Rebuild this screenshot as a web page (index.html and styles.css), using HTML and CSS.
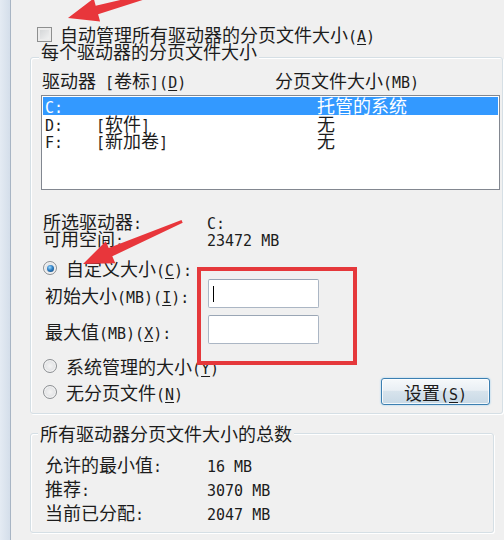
FILE: index.html
```html
<!DOCTYPE html>
<html lang="zh-CN">
<head>
<meta charset="utf-8">
<title>虚拟内存</title>
<link rel="stylesheet" href="styles.css">
</head>
<body>
<div class="window">
  <div class="edge"></div>
  <div class="main">
    <div class="check-row">
      <span class="checkbox"></span>
      <span>自动管理所有驱动器的分页文件大小<span class="a">(<u>A</u>)</span></span>
    </div>

    <div class="group g1">
      <div class="legend">每个驱动器的分页文件大小</div>
      <div class="cols">
        <span class="c1">驱动器<span class="a"> [</span>卷标<span class="a">](<u>D</u>)</span></span>
        <span>分页文件大小<span class="a">(MB)</span></span>
      </div>
      <div class="listbox">
        <div class="item sel"><span><span class="a">C:</span></span><span></span><span>托管的系统</span></div>
        <div class="item"><span><span class="a">D:</span></span><span><span class="a">[</span>软件<span class="a">]</span></span><span>无</span></div>
        <div class="item"><span><span class="a">F:</span></span><span><span class="a">[</span>新加卷<span class="a">]</span></span><span>无</span></div>
      </div>

      <div class="info">
        <span>所选驱动器<span class="a">:</span></span><span><span class="a">C:</span></span>
        <span>可用空间<span class="a">:</span></span><span><span class="a">23472 MB</span></span>
      </div>

      <div class="radio-row r1">
        <span class="radio on"></span>
        <span>自定义大小<span class="a">(<u>C</u>):</span></span>
      </div>
      <div class="size-grid">
        <span class="lbl">初始大小<span class="a">(MB)(<u>I</u>):</span></span>
        <div class="input"><span class="caret"></span></div>
        <span class="lbl">最大值<span class="a">(MB)(<u>X</u>):</span></span>
        <div class="input"></div>
      </div>
      <div class="radio-row r2">
        <span class="radio"></span>
        <span>系统管理的大小<span class="a">(<u>Y</u>)</span></span>
      </div>
      <div class="last-row">
        <div class="radio-row">
          <span class="radio"></span>
          <span>无分页文件<span class="a">(<u>N</u>)</span></span>
        </div>
        <button class="btn" type="button"><span>设置<span class="a">(<u>S</u>)</span></span></button>
      </div>
    </div>

    <div class="group g2">
      <div class="legend">所有驱动器分页文件大小的总数</div>
      <div class="totals">
        <span>允许的最小值<span class="a">:</span></span><span><span class="a">16 MB</span></span>
        <span>推荐<span class="a">:</span></span><span><span class="a">3070 MB</span></span>
        <span>当前已分配<span class="a">:</span></span><span><span class="a">2047 MB</span></span>
      </div>
    </div>
  </div>

  <div class="highlight"></div>
  <svg class="arrows" width="504" height="540" viewBox="0 0 504 540" aria-hidden="true">
    <polygon fill="#e8363b" points="68,18 100.1,21.6 98.1,14.3 155.3,-4.1 154.3,-7.9 95.7,5.7 93.7,-1.6"/>
    <polygon fill="#e8363b" points="83,264 115.3,263.2 112.3,256.3 182.7,222.7 181.5,219.9 108.7,248.1 105.8,241.2"/>
  </svg>
</div>
</body>
</html>
```

FILE: styles.css
```css
* { box-sizing: border-box; margin: 0; padding: 0; }
html, body { width: 504px; height: 540px; overflow: hidden; }
body {
  background: #f0f0f0;
  font-family: "Noto Sans CJK SC", "Noto Sans", sans-serif;
  font-size: 18px;
  line-height: 18px;
  color: #1c1c1c;
}
.a { font-family: "DejaVu Sans Mono", "Liberation Mono", monospace; font-size: 15px; line-height: 0; }
u { text-decoration-thickness: 1px; text-underline-offset: 2px; }

.window { position: relative; display: flex; height: 540px; }
.edge {
  flex: none;
  width: 11px;
  background: linear-gradient(90deg, #e4ebf3, #d4deea);
  border-right: 1px solid #a8b5c4;
}
.main { flex: 1; min-width: 0; padding-left: 19px; }

.check-row {
  display: flex;
  align-items: center;
  gap: 8px;
  margin-top: 25px;
  height: 18px;
  padding-left: 7px;
}
.checkbox {
  flex: none;
  width: 15px;
  height: 15px;
  border: 1px solid #8e8f8f;
  background: linear-gradient(135deg, #cfd1d3, #f6f6f6);
  box-shadow: inset 0 0 0 2px #ececec;
}

.group {
  border: 1px solid #d5dfe5;
  border-radius: 3px;
  box-shadow: inset 1px 1px 0 #fff, 1px 1px 0 #fff;
}
.legend {
  width: fit-content;
  height: 18px;
  background: #f0f0f0;
  padding: 0 2px;
}
.g1 { margin-top: 14px; margin-right: 1px; padding-bottom: 8px; }
.g1 .legend { margin-top: -16px; margin-left: 8px; }

.cols { display: flex; margin-top: 11px; padding-left: 11px; height: 18px; }
.c1 { width: 233px; }

.listbox {
  margin: 6px 2px 0 10px;
  height: 95px;
  border: 1px solid #828790;
  background: #fff;
  padding: 1px;
}
.item {
  display: grid;
  grid-template-columns: 51px 221px 1fr;
  height: 17.5px;
  line-height: 17.5px;
  padding-left: 2px;
}
.item.sel { background: #3399ff; color: #fff; }

.info {
  display: grid;
  grid-template-columns: 164px 1fr;
  margin-top: 23px;
  padding-left: 12px;
  line-height: 17px;
}

.radio-row {
  display: flex;
  align-items: center;
  gap: 9px;
  padding-left: 12px;
  height: 18px;
}
.radio {
  flex: none;
  position: relative;
  width: 14px;
  height: 14px;
  border-radius: 50%;
  border: 1px solid #8c8f93;
  background: radial-gradient(circle at 50% 50%, #f4f4f4 0%, #e2e3e5 60%, #cfd1d4 100%);
  box-shadow: inset 0 0 0 1px #f7f7f7;
}
.radio.on::after {
  content: "";
  position: absolute;
  left: 2.5px;
  top: 2.5px;
  width: 7px;
  height: 7px;
  border-radius: 50%;
  background: radial-gradient(circle at 40% 35%, #9fdcff 0%, #2f7fc4 45%, #0d3f70 100%);
}
.r1 { margin-top: 12px; }
.r2 { margin-top: 13px; }

.size-grid {
  display: grid;
  grid-template-columns: 163px 111px;
  row-gap: 7px;
  align-items: center;
  padding-left: 14px;
  margin-top: 2px;
}
.lbl { padding-top: 3px; }
.input {
  height: 29px;
  border: 1px solid #abb6c4;
  border-top-color: #9aa6b5;
  border-radius: 2px;
  background: #fff;
  display: flex;
  align-items: center;
}
.caret { width: 1px; height: 16px; margin-left: 4px; background: #000; }

.last-row {
  display: flex;
  align-items: center;
  justify-content: space-between;
  margin-top: 3px;
  padding-right: 12px;
  height: 27px;
}
.btn {
  width: 109px;
  height: 27px;
  font: inherit;
  color: #1c1c1c;
  border: 1px solid #3c7fb1;
  border-radius: 3px;
  background: linear-gradient(#f6f9fb 0%, #e9eff4 45%, #d7e3ec 50%, #c8d9e6 100%);
  box-shadow: inset 0 0 0 1px rgba(255, 255, 255, 0.8), 0 0 2px #8cc8ee;
  display: flex;
  align-items: center;
  justify-content: center;
}

.g2 { margin-top: 19px; margin-right: 10px; padding-bottom: 8px; }
.g2 .legend { margin-top: -10px; margin-left: 7px; }
.totals {
  display: grid;
  grid-template-columns: 162px 1fr;
  margin-top: 10px;
  padding-left: 14px;
  line-height: 24px;
}

.highlight {
  position: absolute;
  left: 197px;
  top: 267px;
  width: 160px;
  height: 98px;
  border: 4px solid #e5383b;
}
.arrows { position: absolute; left: 0; top: 0; pointer-events: none; }
```
